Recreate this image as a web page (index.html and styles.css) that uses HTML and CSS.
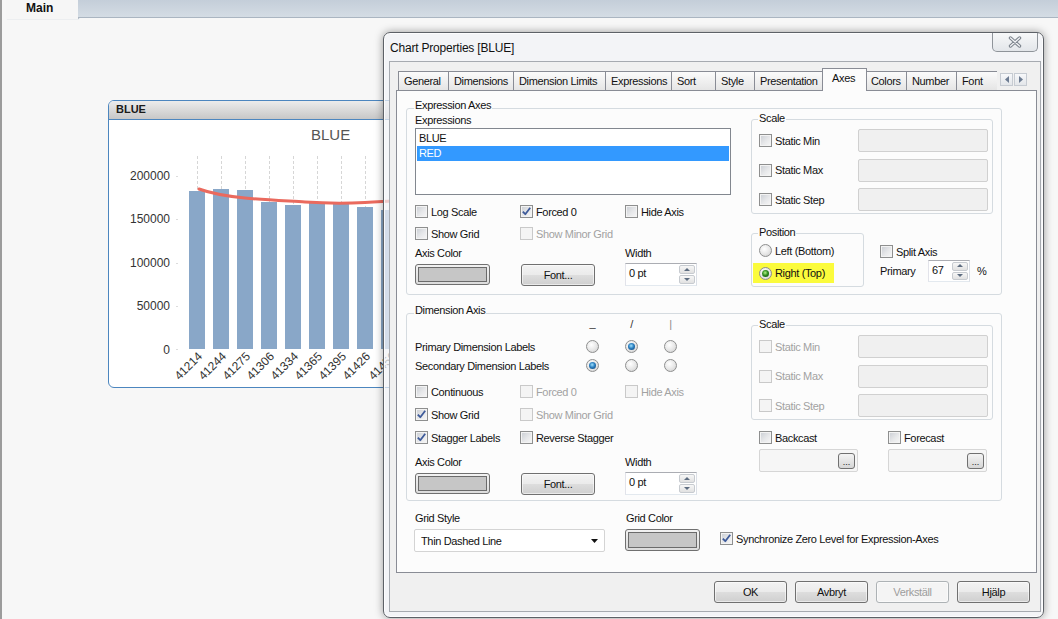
FILE: index.html
```html
<!DOCTYPE html>
<html>
<head>
<meta charset="utf-8">
<title>Chart Properties</title>
<link rel="stylesheet" href="styles.css">
</head>
<body>
<div class="app">
  <div class="topbar">
    <div class="tabgap"></div>
    <div class="maintab">Main</div>
    <div class="tabfill"></div>
  </div>

  <div class="chartobj">
    <div class="caption">BLUE</div>
    <svg class="chart" width="300" height="267" viewBox="109 120 300 267">
      <text x="311" y="140" class="ctitle">BLUE</text>
      <g class="ylab">
        <text x="170" y="180">200000</text>
        <text x="170" y="223">150000</text>
        <text x="170" y="267">100000</text>
        <text x="170" y="310">50000</text>
        <text x="170" y="354">0</text>
      </g>
      <g class="ticks">
        <line x1="176" y1="176.5" x2="178" y2="176.5"/>
        <line x1="176" y1="219.5" x2="178" y2="219.5"/>
        <line x1="176" y1="263.5" x2="178" y2="263.5"/>
        <line x1="176" y1="306.5" x2="178" y2="306.5"/>
        <line x1="176" y1="349.5" x2="178" y2="349.5"/>
      </g>
      <g class="vgrid">
        <line x1="197.5" y1="156" x2="197.5" y2="349"/>
        <line x1="221.5" y1="156" x2="221.5" y2="349"/>
        <line x1="245.5" y1="156" x2="245.5" y2="349"/>
        <line x1="269.5" y1="156" x2="269.5" y2="349"/>
        <line x1="293.5" y1="156" x2="293.5" y2="349"/>
        <line x1="317.5" y1="156" x2="317.5" y2="349"/>
        <line x1="341.5" y1="156" x2="341.5" y2="349"/>
        <line x1="365.5" y1="156" x2="365.5" y2="349"/>
        <line x1="389.5" y1="156" x2="389.5" y2="349"/>
      </g>
      <g class="bars">
        <rect x="189" y="191" width="16" height="158"/>
        <rect x="213" y="189" width="16" height="160"/>
        <rect x="237" y="190" width="16" height="159"/>
        <rect x="261" y="202" width="16" height="147"/>
        <rect x="285" y="205" width="16" height="144"/>
        <rect x="309" y="202" width="16" height="147"/>
        <rect x="333" y="203" width="16" height="146"/>
        <rect x="357" y="207" width="16" height="142"/>
        <rect x="381" y="210" width="16" height="139"/>
      </g>
      <path class="redline" d="M199 189 C210 193 225 196 245 198 S290 201 305 202 S345 203.5 365 202.5 S388 201 405 200.5"/>
      <g class="xlab">
        <text transform="translate(203 357) rotate(-45)">41214</text>
        <text transform="translate(227 357) rotate(-45)">41244</text>
        <text transform="translate(251 357) rotate(-45)">41275</text>
        <text transform="translate(275 357) rotate(-45)">41306</text>
        <text transform="translate(299 357) rotate(-45)">41334</text>
        <text transform="translate(323 357) rotate(-45)">41365</text>
        <text transform="translate(347 357) rotate(-45)">41395</text>
        <text transform="translate(371 357) rotate(-45)">41426</text>
        <text transform="translate(397 357) rotate(-45)">41456</text>
      </g>
    </svg>
  </div>

  <div class="dialog">
    <div class="titlebar">
      <span class="title">Chart Properties [BLUE]</span>
      <span class="closebtn">
        <svg width="14" height="12" viewBox="0 0 14 12"><path d="M2.5 2 L11.5 10 M11.5 2 L2.5 10" stroke="#7d848d" stroke-width="3.4" stroke-linecap="round"/><path d="M2.5 2 L11.5 10 M11.5 2 L2.5 10" stroke="#f4f5f7" stroke-width="1.2" stroke-linecap="round"/></svg>
      </span>
    </div>
    <div class="client">
      <div class="tabs">
        <div class="tabstrip">
          <span class="tab w1">General</span>
          <span class="tab w2">Dimensions</span>
          <span class="tab w3">Dimension Limits</span>
          <span class="tab w4">Expressions</span>
          <span class="tab w5">Sort</span>
          <span class="tab w6">Style</span>
          <span class="tab w7">Presentation</span>
          <span class="tab active w8">Axes</span>
          <span class="tab w9">Colors</span>
          <span class="tab w10">Number</span>
          <span class="tab w11">Font</span>
        </div>
        <div class="tabarrows">
          <span class="arr"><svg width="4" height="7" viewBox="0 0 4 7"><path d="M4 0 L0 3.5 L4 7Z" fill="#6d7c92"/></svg></span>
          <span class="arr"><svg width="4" height="7" viewBox="0 0 4 7"><path d="M0 0 L4 3.5 L0 7Z" fill="#6d7c92"/></svg></span>
        </div>
      </div>

      <div class="pane">
        <!-- Expression Axes -->
        <div class="group outer g-expr">
          <span class="legend">Expression Axes</span>
          <div class="lcol">
            <div class="lbl">Expressions</div>
            <div class="listbox">
              <div class="li">BLUE</div>
              <div class="li sel">RED</div>
            </div>
            <div class="cbrow first">
              <span class="chk"><span class="cb"></span>Log Scale</span>
              <span class="chk"><span class="cb"><svg width="11" height="11" viewBox="0 0 11 11"><path d="M1.8 5.6 L4.3 8.2 L9.2 1.8" class="tick"/></svg></span>Forced 0</span>
              <span class="chk"><span class="cb"></span>Hide Axis</span>
            </div>
            <div class="cbrow">
              <span class="chk"><span class="cb"></span>Show Grid</span>
              <span class="chk dis"><span class="cb"></span>Show Minor Grid</span>
            </div>
            <div class="lblrow"><span>Axis Color</span><span>Width</span></div>
            <div class="ctrlrow">
              <span class="colorbtn"><span class="swatch"></span></span>
              <span class="btn fontbtn">Font...</span>
              <span class="spin"><span class="spinval">0 pt</span><span class="spinbtns"><span class="sb up"></span><span class="sb dn"></span></span></span>
            </div>
          </div>
          <div class="rcol">
            <div class="group inner scale">
              <span class="legend">Scale</span>
              <div class="srow"><span class="chk"><span class="cb"></span>Static Min</span><span class="tinput"></span></div>
              <div class="srow"><span class="chk"><span class="cb"></span>Static Max</span><span class="tinput"></span></div>
              <div class="srow"><span class="chk"><span class="cb"></span>Static Step</span><span class="tinput"></span></div>
            </div>
            <div class="posrow">
              <div class="group inner pos">
                <span class="legend">Position</span>
                <div class="rrow"><span class="rd"></span>Left (Bottom)</div>
                <div class="rrow hl"><span class="rd on green"></span>Right (Top)</div>
              </div>
              <div class="split">
                <span class="chk"><span class="cb"></span>Split Axis</span>
                <div class="prow">
                  <span class="plbl">Primary</span>
                  <span class="spin small"><span class="spinval">67</span><span class="spinbtns"><span class="sb up"></span><span class="sb dn"></span></span></span>
                  <span class="pct">%</span>
                </div>
              </div>
            </div>
          </div>
        </div>

        <!-- Dimension Axis -->
        <div class="group outer g-dim">
          <span class="legend">Dimension Axis</span>
          <div class="lcol">
            <div class="drow head"><span></span><span class="hd us">_</span><span class="hd">/</span><span class="hd bar">|</span></div>
            <div class="drow r1"><span>Primary Dimension Labels</span><span class="rd"></span><span class="rd on"></span><span class="rd"></span></div>
            <div class="drow r2"><span>Secondary Dimension Labels</span><span class="rd on"></span><span class="rd"></span><span class="rd"></span></div>
            <div class="cbrow dfirst">
              <span class="chk"><span class="cb"></span>Continuous</span>
              <span class="chk dis"><span class="cb"></span>Forced 0</span>
              <span class="chk dis"><span class="cb"></span>Hide Axis</span>
            </div>
            <div class="cbrow dnext">
              <span class="chk"><span class="cb"><svg width="11" height="11" viewBox="0 0 11 11"><path d="M1.8 5.6 L4.3 8.2 L9.2 1.8" class="tick"/></svg></span>Show Grid</span>
              <span class="chk dis"><span class="cb"></span>Show Minor Grid</span>
            </div>
            <div class="cbrow dnext">
              <span class="chk"><span class="cb"><svg width="11" height="11" viewBox="0 0 11 11"><path d="M1.8 5.6 L4.3 8.2 L9.2 1.8" class="tick"/></svg></span>Stagger Labels</span>
              <span class="chk"><span class="cb"></span>Reverse Stagger</span>
            </div>
            <div class="lblrow dl"><span>Axis Color</span><span>Width</span></div>
            <div class="ctrlrow">
              <span class="colorbtn"><span class="swatch"></span></span>
              <span class="btn fontbtn">Font...</span>
              <span class="spin"><span class="spinval">0 pt</span><span class="spinbtns"><span class="sb up"></span><span class="sb dn"></span></span></span>
            </div>
          </div>
          <div class="rcol">
            <div class="group inner scale dscale">
              <span class="legend">Scale</span>
              <div class="srow"><span class="chk dis"><span class="cb"></span>Static Min</span><span class="tinput"></span></div>
              <div class="srow"><span class="chk dis"><span class="cb"></span>Static Max</span><span class="tinput"></span></div>
              <div class="srow"><span class="chk dis"><span class="cb"></span>Static Step</span><span class="tinput"></span></div>
            </div>
            <div class="bfrow">
              <div class="bfcol">
                <span class="chk"><span class="cb"></span>Backcast</span>
                <div class="ellinput"><span class="ell">...</span></div>
              </div>
              <div class="bfcol">
                <span class="chk"><span class="cb"></span>Forecast</span>
                <div class="ellinput"><span class="ell">...</span></div>
              </div>
            </div>
          </div>
        </div>

        <div class="bottomrow">
          <div class="bc c1">
            <div class="lbl">Grid Style</div>
            <div class="dropdown"><span>Thin Dashed Line</span><svg width="7" height="4" viewBox="0 0 7 4"><path d="M0 0 L7 0 L3.5 4Z" fill="#111"/></svg></div>
          </div>
          <div class="bc c2">
            <div class="lbl">Grid Color</div>
            <span class="colorbtn"><span class="swatch"></span></span>
          </div>
          <div class="bc c3">
            <span class="chk"><span class="cb"><svg width="11" height="11" viewBox="0 0 11 11"><path d="M1.8 5.6 L4.3 8.2 L9.2 1.8" class="tick"/></svg></span>Synchronize Zero Level for Expression-Axes</span>
          </div>
        </div>
      </div>

      <div class="buttons">
        <span class="btn dbtn">OK</span>
        <span class="btn dbtn">Avbryt</span>
        <span class="btn dbtn disabled">Verkställ</span>
        <span class="btn dbtn">Hjälp</span>
      </div>
    </div>
  </div>
</div>
</body>
</html>
```

FILE: styles.css
```css
* { box-sizing: border-box; }

body {
  margin: 0;
  background: #f7f7f7;
  font-family: "Liberation Sans", Arial, sans-serif;
}

.app {
  position: relative;
  width: 1058px;
  height: 619px;
  overflow: hidden;
  background: #f7f7f7;
  border-left: 2px solid #9c9c9c;
}

/* ---------- sheet tab bar ---------- */
.topbar {
  display: flex;
  height: 19px;
}
.tabgap { width: 4px; border-bottom: 1px solid #f7f7f7; }
.maintab {
  width: 72px;
  height: 19px;
  background: #f6f6f6;
  font-size: 12px;
  font-weight: bold;
  color: #111;
  padding: 1px 0 0 20px;
  line-height: 14px;
  box-shadow: 1px 0 1px #b9c2cc;
}
.tabfill {
  flex: 1;
  height: 18px;
  background: linear-gradient(#c4ced9, #d4dce4);
  border-bottom: 1px solid #aab5c1;
}

/* ---------- chart object ---------- */
.chartobj {
  position: absolute;
  left: 106px;
  top: 100px;
  width: 302px;
  height: 288px;
  border: 1px solid #4c86bf;
  border-radius: 6px;
  background: #fff;
  overflow: hidden;
}
.caption {
  height: 19px;
  background: linear-gradient(#ececec, #c7c7c7);
  border-bottom: 1px solid #4c86bf;
  font-size: 11px;
  font-weight: bold;
  color: #1a1a1a;
  padding: 2px 0 0 7px;
  line-height: 13px;
}
.chart { display: block; font-family: "Liberation Sans", Arial, sans-serif; }
.ctitle { font-size: 15px; fill: #555; }
.ylab text { font-size: 12px; fill: #333; text-anchor: end; }
.ticks line { stroke: #dcdcdc; stroke-width: 1; }
.vgrid line { stroke: #d6d6d6; stroke-width: 1; stroke-dasharray: 3 2; }
.bars rect { fill: #89a7c8; }
.redline { fill: none; stroke: #ea6a5e; stroke-width: 3; stroke-linecap: round; }
.xlab text { font-size: 12px; fill: #333; text-anchor: end; }

/* ---------- dialog window ---------- */
.dialog {
  position: absolute;
  left: 381px;
  top: 32px;
  width: 661px;
  height: 586px;
  border: 1px solid #5d6167;
  border-radius: 7px;
  background: rgba(241, 243, 246, 0.72);
  box-shadow: 0 0 9px rgba(0, 0, 0, 0.38), inset 0 0 0 1px rgba(255,255,255,0.8);
  display: flex;
  flex-direction: column;
  font-size: 11px;
  letter-spacing: -0.35px;
  color: #111;
}
.titlebar {
  height: 28px;
  display: flex;
  justify-content: space-between;
  padding: 0 5px 0 6px;
}
.title {
  align-self: center;
  font-size: 12px;
  letter-spacing: -0.2px;
  margin-top: 1px;
}
.closebtn {
  width: 46px;
  height: 19px;
  border: 1px solid #8f949a;
  border-top: none;
  border-radius: 0 0 5px 5px;
  background: linear-gradient(#f7f8f9, #e3e6ea);
  display: flex;
  align-items: center;
  justify-content: center;
}
.client {
  flex: 1;
  margin: 0 2px 5px 5px;
  border: 1px solid #a6aab0;
  background: #f0f0f0;
  padding: 6px 3px 0 6px;
  display: flex;
  flex-direction: column;
}

/* tabs */
.tabs {
  display: flex;
  align-items: flex-end;
  height: 23px;
  margin-bottom: -1px;
  padding-left: 2px;
  position: relative;
  z-index: 1;
}
.tabstrip {
  display: flex;
  align-items: flex-end;
  width: 599px;
  height: 23px;
  overflow: hidden;
}
.tab {
  flex: none;
  height: 20px;
  margin-right: -1px;
  border: 1px solid #898c95;
  background: linear-gradient(#fbfbfb, #e5e5e5);
  display: flex;
  align-items: center;
  justify-content: flex-start;
  padding: 0 0 1px 5px;
  white-space: nowrap;
}
.tab.active {
  height: 23px;
  margin: 0 -2px 0 -2px;
  position: relative;
  z-index: 2;
  border-bottom: none;
  background: #fcfcfc;
  align-items: flex-start;
  padding: 3px 0 0 9px;
}
.w1 { width: 51px; } .w2 { width: 66px; } .w3 { width: 93px; } .w4 { width: 67px; }
.w5 { width: 45px; } .w6 { width: 40px; } .w7 { width: 71px; } .w8 { width: 45px; }
.w9 { width: 42px; } .w10 { width: 51px; } .w11 { width: 42px; }
.tabarrows {
  display: flex;
  gap: 1px;
  margin: 0 0 5px 3px;
}
.arr {
  width: 13px;
  height: 13px;
  border: 1px solid #c6cbd2;
  background: linear-gradient(#f7f8fa, #e3e6ea);
  display: flex;
  align-items: center;
  justify-content: center;
}

/* pane */
.pane {
  height: 483px;
  border: 1px solid #898c95;
  background: #fcfcfc;
  padding: 17px 0 0 9px;
}
.group {
  position: relative;
  border: 1px solid #d5dbe0;
  border-radius: 3px;
}
.legend {
  position: absolute;
  top: -10px;
  left: 7px;
  padding: 0 1px;
  line-height: 13px;
  background: #fcfcfc;
  white-space: nowrap;
}
.group.inner .legend { top: -8px; left: 6px; }

.outer {
  width: 596px;
  display: flex;
  padding: 0 0 0 8px;
}
.g-expr { height: 187px; padding-top: 5px; }
.g-dim { height: 188px; margin-top: 18px; padding-top: 2px; }

.lcol { width: 336px; display: flex; flex-direction: column; }
.rcol { width: 242px; display: flex; flex-direction: column; }

.lbl { height: 13px; line-height: 13px; white-space: nowrap; }
.listbox {
  margin-top: 1px;
  width: 316px;
  height: 67px;
  border: 1px solid #82878f;
  background: #fff;
  padding: 2px 1px 1px 1px;
}
.li { height: 15px; line-height: 15px; padding-left: 2px; }
.li.sel { background: #3399ff; color: #fff; }

.cbrow {
  display: grid;
  grid-template-columns: 105px 105px auto;
  height: 17px;
  align-items: center;
  margin-top: 5px;
}
.cbrow.first { margin-top: 8px; }
.cbrow.dfirst { margin-top: 9px; }
.cbrow.dnext { margin-top: 6px; }

.chk {
  display: inline-flex;
  align-items: center;
  gap: 3px;
  white-space: nowrap;
}
.cb {
  flex: none;
  width: 13px;
  height: 13px;
  border: 1px solid #8e8f8f;
  background: linear-gradient(135deg, #c9cdd3 0%, #e7e8ea 55%, #f7f7f7 100%);
  box-shadow: inset 0 0 0 1px #f3f3f3;
  display: inline-flex;
  align-items: center;
  justify-content: center;
}
.tick { fill: none; stroke: #3d5a9a; stroke-width: 1.8; stroke-linejoin: round; }
.chk.dis { color: #a2a2a2; }
.chk.dis .cb { border-color: #c9c9c9; background: #f4f4f4; box-shadow: none; }

.lblrow {
  display: grid;
  grid-template-columns: 210px auto;
  height: 13px;
  line-height: 13px;
  margin-top: 5px;
}
.lblrow.dl { margin-top: 10px; }
.ctrlrow {
  display: grid;
  grid-template-columns: 106px 104px auto;
  align-items: start;
  margin-top: 3px;
}

.btn {
  display: inline-flex;
  align-items: center;
  justify-content: center;
  border: 1px solid #707070;
  border-radius: 3px;
  background: linear-gradient(#f3f3f3 0%, #ebebeb 48%, #dddddd 52%, #cfcfcf 100%);
  box-shadow: inset 0 0 0 1px rgba(255, 255, 255, 0.55);
  white-space: nowrap;
}
.fontbtn { width: 74px; height: 22px; margin-top: 1px; }
.colorbtn {
  display: inline-flex;
  width: 75px;
  height: 21px;
  margin-top: 1px;
  padding: 2px;
  border: 1px solid #707070;
  border-radius: 3px;
  background: linear-gradient(#f2f2f2, #dcdcdc);
}
.swatch {
  flex: 1;
  border: 1px solid #6b6b6b;
  background: #c6c6c6;
}

.spin {
  display: flex;
  justify-content: space-between;
  width: 72px;
  height: 23px;
  border: 1px solid #abadb3;
  border-color: #abadb3 #dbdfe6 #e3e9ef #e2e3ea;
  background: #fff;
  padding: 1px;
}
.spinval { padding: 2px 0 0 2px; line-height: 13px; }
.spinbtns { display: flex; flex-direction: column; width: 16px; gap: 1px; }
.sb {
  position: relative;
  flex: 1;
  border: 1px solid #c7cbd0;
  border-radius: 2px;
  background: linear-gradient(#f7f7f7, #e1e1e1);
}
.sb::after {
  content: "";
  position: absolute;
  left: 50%;
  top: 50%;
  margin: -2px 0 0 -3px;
  border-left: 3px solid transparent;
  border-right: 3px solid transparent;
}
.sb.up::after { border-bottom: 3px solid #5d6c80; }
.sb.dn::after { border-top: 3px solid #5d6c80; }

/* scale groups */
.scale {
  margin-top: 5px;
  height: 95px;
  padding: 9px 4px 0 7px;
  display: flex;
  flex-direction: column;
  gap: 6.5px;
}
.srow { display: flex; align-items: center; justify-content: space-between; height: 23px; }
.tinput {
  width: 130px;
  height: 23px;
  border: 1px solid #d0d0d0;
  border-radius: 2px;
  background: #f0f0f0;
}

/* position */
.posrow { display: flex; margin-top: 19px; }
.pos { width: 113px; height: 54px; padding-top: 8px; }
.rrow { display: flex; align-items: center; gap: 3px; height: 17px; padding-left: 7px; white-space: nowrap; }
.rrow.hl {
  width: 81px;
  height: 20px;
  margin: 4px 0 0 1px;
  padding-left: 6px;
  background: #fbfb3c;
}
.rd {
  position: relative;
  flex: none;
  width: 13px;
  height: 13px;
  border-radius: 50%;
  border: 1px solid #8e8f8f;
  background: radial-gradient(circle at 40% 35%, #ffffff 0%, #e6e6e6 55%, #c9c9c9 100%);
}
.rd.on::after {
  content: "";
  position: absolute;
  left: 2px;
  top: 2px;
  width: 7px;
  height: 7px;
  border-radius: 50%;
  background: radial-gradient(circle at 45% 40%, #9fe2ff 0%, #2b7fc0 45%, #0b3b6d 100%);
}
.rd.on.green::after {
  background: radial-gradient(circle at 45% 40%, #b6f58a 0%, #2f8f20 45%, #0d450c 100%);
}
.split { margin-left: 16px; padding-top: 12px; display: flex; flex-direction: column; }
.prow { display: flex; align-items: center; margin-top: 2px; }
.plbl { width: 48px; }
.spin.small { width: 42px; height: 22px; }
.pct { margin-left: 7px; }

/* dimension rows */
.drow {
  display: grid;
  grid-template-columns: 145px 13px 13px 13px;
  column-gap: 26px;
  align-items: center;
  white-space: nowrap;
}
.drow.head { height: 15px; margin-top: 1px; }
.drow.r1 { height: 17px; margin-top: 6px; }
.drow.r2 { height: 17px; margin-top: 2px; }
.hd { text-align: center; color: #333; line-height: 13px; }
.hd.us { margin-top: -3px; }
.hd.bar { color: #8a8a8a; }

.dscale { margin-top: 9px; }
.bfrow { display: flex; gap: 30px; margin: 9px 0 0 8px; }
.bfcol { width: 99px; display: flex; flex-direction: column; }
.bfcol .chk { height: 17px; }
.ellinput {
  margin-top: 3px;
  height: 23px;
  border: 1px solid #d6d6d6;
  border-radius: 2px;
  background: #f6f6f6;
  display: flex;
  justify-content: flex-end;
  align-items: center;
  padding-right: 2px;
}
.ell {
  width: 17px;
  height: 16px;
  border: 1px solid #707070;
  border-radius: 3px;
  background: linear-gradient(#f4f4f4, #d6d6d6);
  font-size: 9px;
  line-height: 16px;
  text-align: center;
  letter-spacing: 0;
}

/* bottom row */
.bottomrow { display: flex; margin-top: 11px; padding-left: 8px; }
.bc { display: flex; flex-direction: column; }
.bc .lbl { margin-left: 1px; }
.c1 { width: 211px; }
.c2 { width: 95px; }
.c3 { padding-top: 18px; }
.dropdown {
  margin-top: 4px;
  width: 191px;
  height: 23px;
  border: 1px solid #d4d4d4;
  border-radius: 2px;
  background: #fff;
  display: flex;
  align-items: center;
  justify-content: space-between;
  padding: 0 6px 0 6px;
}
.c2 .colorbtn { margin-top: 4px; height: 22px; }
.c3 .chk { height: 17px; }

/* dialog buttons */
.buttons {
  display: flex;
  justify-content: flex-end;
  gap: 8px;
  margin-top: 8px;
  padding-right: 7px;
}
.dbtn { width: 73px; height: 22px; }
.dbtn.disabled {
  color: #9d9d9d;
  border-color: #adb2b5;
  background: #f4f4f4;
}
```
